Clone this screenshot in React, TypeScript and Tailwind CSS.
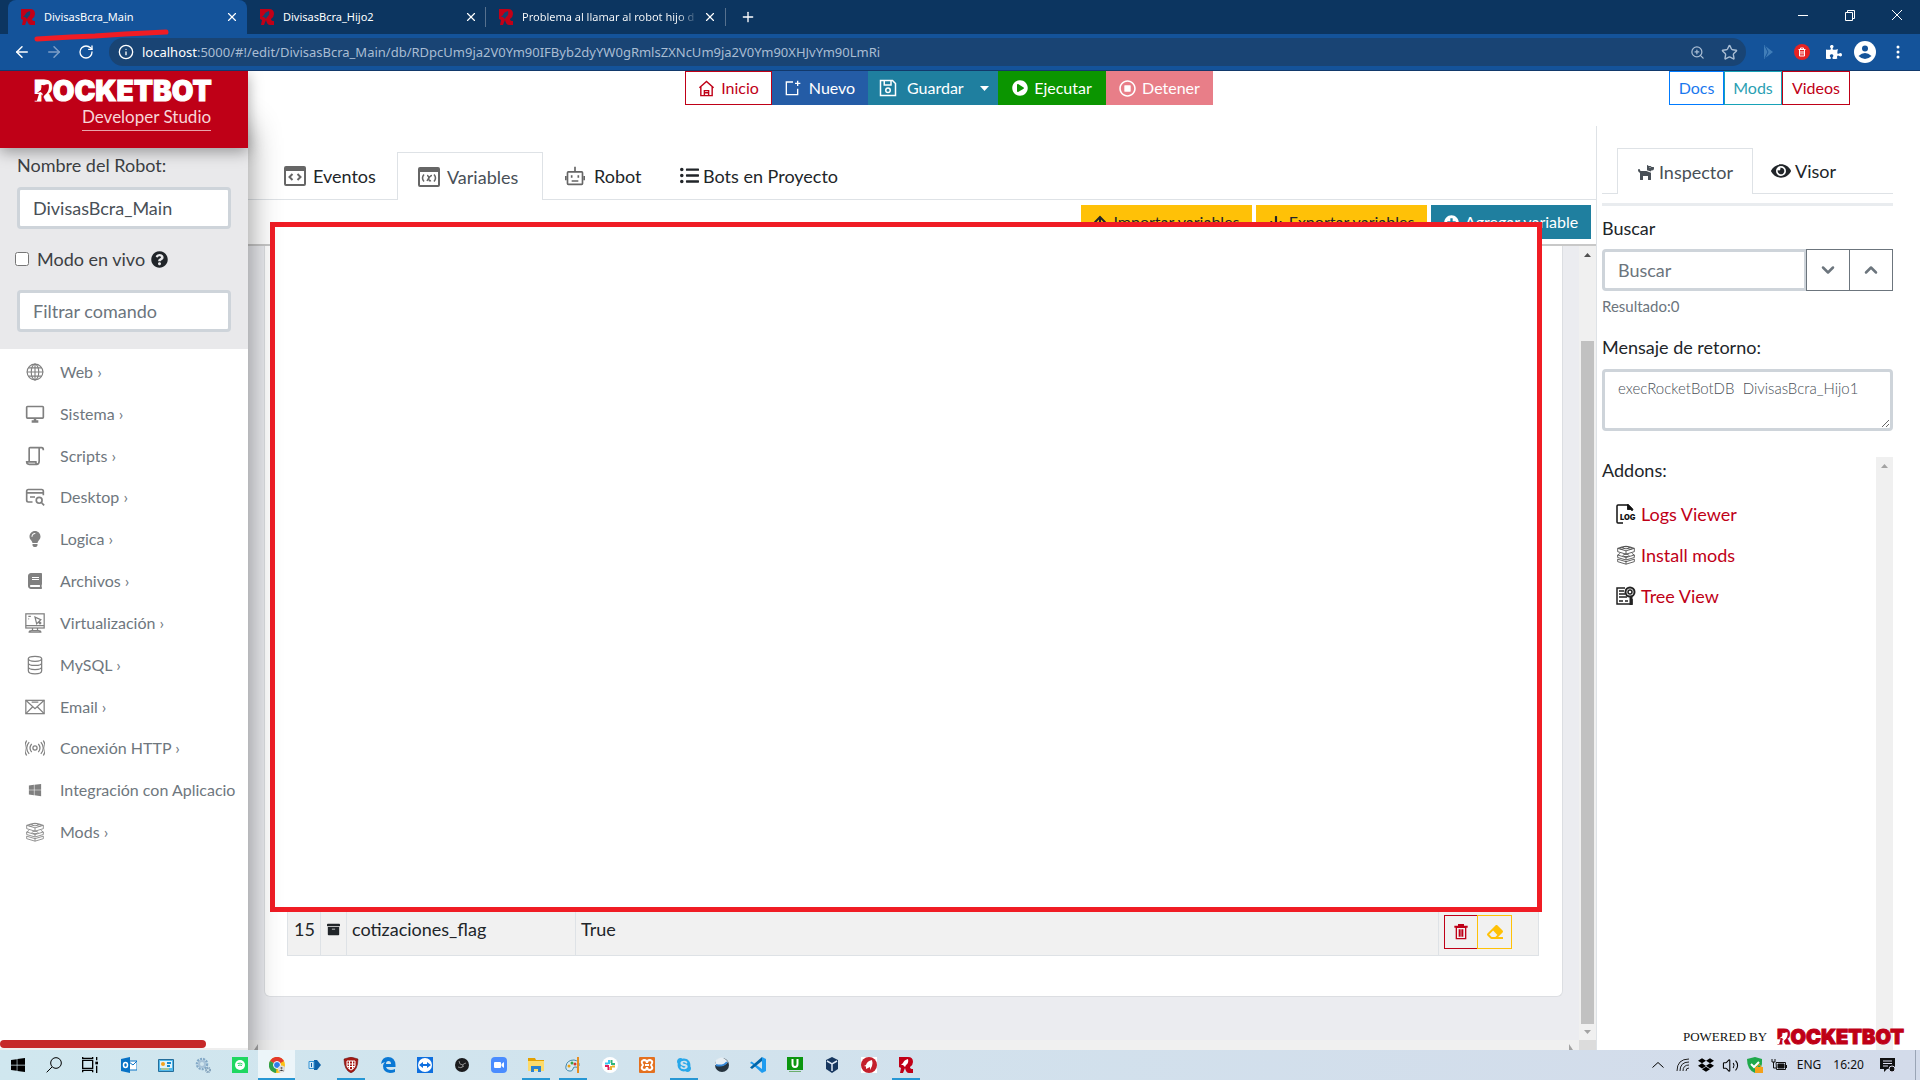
import type {ReactNode} from "react";
import {FaArchive, FaArrowDown, FaArrowUp, FaBook, FaDog, FaDropbox, FaEraser, FaEye, FaLightbulb, FaListUl, FaPlayCircle, FaPlusCircle, FaPuzzlePiece, FaQuestionCircle, FaRegStopCircle, FaSkype, FaWindows} from "react-icons/fa";
import {ArrowLeft, ArrowRight, ChevronDown, ChevronUp, Info, Plus, RotateCw, Star, Volume2, X, ZoomIn} from "lucide-react";

type IconProps = { className?: string };

const RocketR = ({className = "size-4"}: IconProps) => (
    <svg viewBox="0 0 16 16" className={className}>
        <path d="M1 0h9q5 0 5 5 0 3-3 5 0 2 3 2v4h-4q-3 0-4-5l-2 5H2l1-5-2-1z" fill="#c10017"/>
        <path d="M10 2Q6 3 5 6L3 8h2l2 2 1-2q3-2 2-6z" fill="#14436f"/>
    </svg>
);

const Wordmark = ({className, cut}: { className: string, cut: string }) => (
    <span className={`relative inline-block font-black leading-none [-webkit-text-stroke:1px] ${className}`}>
        ROCKETBOT
        <svg viewBox="0 0 20 20" className="absolute left-0 top-[14%] h-[72%] w-[11%]" fill={cut}>
            <path d="M15 3c-4 0-7 2-8 6l-4 3 4-1 2 2-1 5 3-4c3-2 5-6 4-11z"/>
            <path d="M0 13h5l-2 7H0z"/>
        </svg>
    </span>
);

const Line = ({children, className = "size-5", w = 1.5}: { children: ReactNode, className?: string, w?: number }) => (
    <svg viewBox="0 0 24 24" className={className} fill="none" stroke="currentColor" strokeWidth={w}>{children}</svg>
);

const WindowIcon = ({kind}: { kind: "code" | "var" }) => (
    <svg viewBox="0 0 22 20" className="w-[22px] h-5 text-[#666]" fill="none" stroke="currentColor" strokeWidth="2">
        <rect x="1" y="1" width="20" height="18" rx="1"/>
        <path d="M1 3h20" strokeWidth="4"/>
        {kind === "code"
            ? <path d="m8.500 8-3 3 3 3M13.500 8l3 3-3 3"/>
            : <path d="M6 7.500q-3 3.500 0 7M16 7.500q3 3.500 0 7M9 8.500q2 0 2 5M14 8.500q-2 0-5 5.500M11 13.500q1 .5 2 0" strokeWidth="1.500"/>}
    </svg>
);

const ModsIcon = ({className = "size-5"}: IconProps) => (
    <Line className={className} w={1}>
        <path d="M2 4v4l10 3 10-3V4L12 7zM2 12v3l10 3 10-3v-3l-10 3zM2 17v3l10 3 10-3v-3l-10 3zM2 4l6-2h8l6 2M2 12l3-2M22 12l-3-2M12 7v4M12 15v3M12 20v3"/>
        <ellipse cx="12" cy="3" rx="3.500" ry="1.500"/>
        <ellipse cx="7" cy="4" rx="2.500" ry="1"/>
        <ellipse cx="17" cy="4" rx="2.500" ry="1"/>
        <ellipse cx="12" cy="12.500" rx="3.500" ry="1.500"/>
    </Line>
);

const MENU: { label: string, icon: ReactNode }[] = [
    {label: "Web", icon: <Line className="size-[18px]"><circle cx="12" cy="12" r="10.500"/><ellipse cx="12" cy="12" rx="5" ry="10.500"/><path d="M12 1v22M1 12h22M3 6.500h18M3 17.500h18"/></Line>},
    {label: "Sistema", icon: <Line className="size-5" w={2}><rect x="2" y="3" width="20" height="14" rx="1"/><path d="M8 21h8M12 17v4" strokeWidth="3"/></Line>},
    {label: "Scripts", icon: <Line className="size-5" w={2}><path d="M5 18V3q0-1 1-1h14q2 0 2 3M17 2v16q0 4-3 4M2 19h11q0 3 2 3H5q-3 0-3-3z"/></Line>},
    {label: "Desktop", icon: <Line className="size-5" w={2}><path d="M9 18H4q-2 0-2-2V5q0-2 2-2h16q2 0 2 2v5M2 7h20M6 12h6"/><circle cx="17" cy="16" r="3.500"/><path d="m20 19 3 3"/></Line>},
    {label: "Logica", icon: <FaLightbulb className="size-4"/>},
    {label: "Archivos", icon: <FaBook className="size-4"/>},
    {label: "Virtualización", icon: <Line className="size-5"><rect x="1" y="1" width="22" height="17"/><path d="M1 15h22M9 18v3M15 18v3M5 23q0-2 3-2h8q3 0 3 2zM12 5l2 8 2-2 2 2 1-1-2-2 2-2zM4 4h3M4 7h1"/></Line>},
    {label: "MySQL", icon: <Line className="size-5"><ellipse cx="12" cy="4.500" rx="8" ry="3"/><path d="M4 4.500V19c0 5 16 5 16 0V4.500M4 9.500c0 4 16 4 16 0M4 14.500c0 4 16 4 16 0"/></Line>},
    {label: "Email", icon: <Line className="size-5"><rect x="1" y="4" width="22" height="16"/><path d="m1 4 11 10L23 4M1 20l8-8M23 20l-8-8M8 6h8"/></Line>},
    {label: "Conexión HTTP", icon: <Line className="size-5"><circle cx="12" cy="12" r="2.500"/><path d="M8 7q-4 5 0 10M16 7q4 5 0 10M5 5q-6 7 0 14M19 5q6 7 0 14M2 3q-5 9 0 18M22 3q5 9 0 18"/></Line>},
    {label: "Integración con Aplicacio", icon: <FaWindows className="size-[14px]"/>},
    {label: "Mods", icon: <ModsIcon/>},
];

const BROWSER_TABS = ["DivisasBcra_Main", "DivisasBcra_Hijo2", "Problema al llamar al robot hijo d"];

const Browser = () => (
    <header className="relative z-30 shrink-0 bg-[#0c3560] font-['Noto_Sans',sans-serif] text-white">
        <div className="flex h-[34px] items-stretch pl-2">
            {BROWSER_TABS.map((title, i) => (
                <div key={title} className={`flex w-[239px] items-center ${i === 0 ? "rounded-t-lg bg-[#14539a]" : ""} ${i === 2 ? "relative before:absolute before:-left-px before:h-5 before:w-px before:bg-[#57718e]" : ""} pl-3 pr-2`}>
                    <RocketR/>
                    <span className={`ml-2 whitespace-nowrap text-[11px] ${i === 2 ? "bg-linear-to-r from-white from-90% to-white/20 bg-clip-text text-transparent" : ""}`}>{title}</span>
                    <button aria-label="Cerrar" className="ml-auto"><X className="size-[14px]"/></button>
                </div>
            ))}
            <div className="my-2 w-px bg-[#57718e]"/>
            <button aria-label="Nueva" className="px-[14px]"><Plus className="size-4"/></button>
            <div className="ml-auto flex items-center gap-[35px] pb-1 pr-[17px]">
                <svg viewBox="0 0 12 12" className="size-3" stroke="#fff"><path d="M1 6.500h10"/></svg>
                <svg viewBox="0 0 12 12" className="size-3" stroke="#fff" fill="none"><path d="M1.500 3.500h7v8h-7zM3.500 3.500v-2h7v8h-2"/></svg>
                <svg viewBox="0 0 12 12" className="size-3" stroke="#fff"><path d="m1 1 10 10M11 1 1 11"/></svg>
            </div>
        </div>
        <div className="flex h-[37px] items-center border-b border-b-[#12396b] bg-[#14539a] pr-4">
            <ArrowLeft className="ml-[13px] size-[18px]"/>
            <ArrowRight className="ml-[14px] size-[18px] text-[#7d9fc7]"/>
            <RotateCw className="ml-[15px] size-4"/>
            <div className="ml-[15px] flex h-7 flex-1 items-center rounded-full bg-[#194474] pl-[9px] pr-2 text-[#a9bdd3]">
                <Info className="size-4 text-white"/>
                <span className="ml-2 flex-1 text-[13px]"><span className="text-white">localhost</span>:5000/#!/edit/DivisasBcra_Main/db/RDpcUm9ja2V0Ym90IFByb2dyYW0gRmlsZXNcUm9ja2V0Ym90XHJvYm90LmRi</span>
                <ZoomIn className="size-[15px]"/>
                <Star className="ml-4 size-[17px]"/>
            </div>
            <svg viewBox="0 0 12 14" className="ml-4 w-3 h-[14px]"><path d="M2 0 11 7 2 14z" fill="#407db8"/><path d="m3 1 3 6-3 6" stroke="#14539a" fill="none"/></svg>
            <span className="ml-5 flex size-4 items-center justify-center rounded-full bg-[#e62222]">
                <Line className="size-3" w={2}><path d="M5 7h14M9 7V4h6v3M7 7v13h10V7M10 10v7M14 10v7"/></Line>
            </span>
            <FaPuzzlePiece className="ml-4 size-4"/>
            <svg viewBox="0 0 22 22" className="ml-3 size-[22px]"><circle cx="11" cy="11" r="11" fill="#fff"/><circle cx="11" cy="7.500" r="3" fill="#14539a"/><path d="M4.500 15q6.500-6 13 0-6.500 6-13 0" fill="#14539a"/></svg>
            <svg viewBox="0 0 4 14" className="ml-5 mr-1 w-1 h-[14px]" fill="#fff"><circle cx="2" cy="2" r="1.500"/><circle cx="2" cy="7" r="1.500"/><circle cx="2" cy="12" r="1.500"/></svg>
        </div>
        <svg viewBox="0 0 140 16" className="absolute left-8 top-7 h-4 w-[140px]" fill="none" stroke="#f01c24" strokeWidth="5" strokeLinecap="round">
            <path d="m5 11 34-2 24-1 30-2 21-1 20-1"/>
        </svg>
    </header>
);

const Sidebar = () => (
    <aside className="z-20 flex w-[248px] shrink-0 flex-col bg-white shadow-[0_56px_30px_rgba(0,0,0,0.45)]">
        <div className="z-10 flex h-[77px] shrink-0 flex-col bg-[#bf0017] pl-[34px] pt-[6px] text-white shadow-[0_4px_14px_rgba(0,0,0,0.35)]">
            <Wordmark className="self-start font-['Inter',sans-serif] text-[28px]" cut="#bf0017"/>
            <span className="ml-12 self-start border-b border-[#e9a5ac] pb-px text-[17px] leading-6 text-[#f7d5d8]">Developer Studio</span>
        </div>
        <div className="h-[201px] shrink-0 bg-[#e9e9eb] px-[17px] pt-1 text-[#3c4043]">
            <label htmlFor="robot" className="block leading-[26px]">Nombre del Robot:</label>
            <input id="robot" defaultValue="DivisasBcra_Main" className="mt-[9px] h-[42px] w-full rounded border-3 border-[#ced4da] bg-white px-[13px] text-[#495057]"/>
            <label className="-ml-[2px] mt-[17px] flex h-[26px] items-center">
                <input type="checkbox" className="size-[14px]"/>
                <span className="ml-2">Modo en vivo</span>
                <FaQuestionCircle className="ml-[6px] size-[17px] text-[#212529]"/>
            </label>
            <input aria-label="Filtrar comando" placeholder="Filtrar comando" className="mt-[18px] h-[42px] w-full rounded border-3 border-[#ced4da] bg-white px-[13px] placeholder:text-[#6c757d]"/>
        </div>
        <ul className="mr-2 mt-[2px] grid h-[502px] shrink-0 grid-rows-12 overflow-hidden text-base text-[#6f777e]">
            {MENU.map(({label, icon}) => (
                <li key={label} className="flex min-h-0 items-center">
                    <span className="ml-[22px] flex w-[26px] shrink-0 justify-center text-[#808080]">{icon}</span>
                    <a href="#menu" className="ml-3 whitespace-nowrap">{label}{label.startsWith("Integ") ? "" : " ›"}</a>
                </li>
            ))}
        </ul>
        <div className="mt-auto h-2 w-[206px] rounded-full bg-[#c62828]"/>
        <div className="h-[2px] bg-[#eee]"/>
    </aside>
);

const TopBar = () => (
    <div className="flex h-[34px] shrink-0 items-stretch pl-[437px] text-base text-white">
        <button className="flex w-[87px] items-center justify-center gap-[6px] border border-[#bf0017] text-[#bf0017]">
            <Line className="size-[17px]" w={2}><path d="M2 11 12 2l10 9M4 10v12h16V10M9 22v-7h6v7M10 18h4"/></Line>Inicio
        </button>
        <button className="flex w-24 items-center justify-center gap-2 bg-[#245ca6]">
            <Line className="size-4" w={2}><path d="M12 3H2v19h17V13M19 1v8M15 5h8"/></Line>Nuevo
        </button>
        <button className="flex w-[110px] items-center gap-[10px] bg-[#1f7f9f] pl-[11px]">
            <Line className="size-[18px]" w={2}><path d="M2 2h16l4 4v16H2zM7 2v6h9V2"/><circle cx="12" cy="15" r="3"/></Line>Guardar
        </button>
        <button aria-label="Más" className="flex w-5 items-center bg-[#1f7f9f]">
            <svg viewBox="0 0 9 5" className="ml-[2px] w-[9px] h-[5px]" fill="#fff"><path d="M0 0h9L4.500 5z"/></svg>
        </button>
        <button className="flex w-[108px] items-center justify-center gap-[6px] bg-[#0b9500]"><FaPlayCircle className="size-4"/>Ejecutar</button>
        <button className="flex w-[107px] items-center justify-center gap-[6px] bg-[#e87e88]"><FaRegStopCircle className="size-[17px]"/>Detener</button>
        <nav className="ml-auto mr-[70px] flex">
            <a href="#docs" className="flex w-[55px] items-center justify-center border border-[#007bff] text-[#1a78ee]">Docs</a>
            <a href="#mods" className="flex w-[58px] items-center justify-center border border-[#17a2b8] text-[#2b9fb3]">Mods</a>
            <a href="#videos" className="flex w-[68px] items-center justify-center border border-[#bf0017] text-[#bf0017]">Videos</a>
        </nav>
    </div>
);

const Editor = () => (
    <section className="relative flex min-w-0 flex-1 flex-col">
        <div className="mt-[47px] flex h-12 shrink-0 items-stretch border-b border-[#dee2e6] text-[#212529]">
            <button className="flex w-[149px] items-center gap-[7px] pl-9"><WindowIcon kind="code"/>Eventos</button>
            <button className="-mb-px flex w-[146px] items-center gap-[7px] border border-b-0 border-[#dee2e6] bg-white pl-5 text-[#495057]"><WindowIcon kind="var"/>Variables</button>
            <button className="flex w-[137px] items-center gap-[9px] pl-[22px]">
                <Line className="size-5 text-[#666]" w={2}><rect x="3" y="7" width="18" height="15" rx="1"/><path d="M12 1v6M1 12v5M23 12v5M8 18h8M8 11v3M16 11v3"/></Line>Robot
            </button>
            <button className="flex items-center gap-1"><FaListUl className="size-[19px]"/>Bots en Proyecto</button>
        </div>
        <div className="flex h-11 shrink-0 items-start justify-end gap-1 pr-[5px] pt-[5px] text-base text-[#212529]">
            <button className="flex h-[34px] w-[171px] items-center justify-center gap-[6px] bg-[#ffc107]"><FaArrowUp className="size-[14px]"/>Importar variables</button>
            <button className="flex h-[34px] w-[171px] items-center justify-center gap-[6px] bg-[#ffc107]"><FaArrowDown className="size-[14px]"/>Exportar variables</button>
            <button className="flex h-[34px] w-40 items-center justify-center gap-[6px] bg-[#1f7f9f] text-white"><FaPlusCircle className="size-[15px]"/>Agregar variable</button>
        </div>
        <div className="flex min-h-0 flex-1 border-t-2 border-[#c8c8c8] bg-[#ebecf0]">
            <div className="flex min-w-0 flex-1 flex-col">
                <div className="mx-4 flex flex-1 flex-col justify-end rounded-b-md border border-t-0 border-[#dcdee2] bg-white pb-10 pl-[22px] pr-[23px]">
                    <table className="w-full table-fixed border-collapse bg-[#f1f1f1] text-[#212529]">
                        <tbody>
                        <tr className="h-[52px] *:border *:border-[#dee2e6] *:pt-[11px] *:align-top">
                            <td className="w-[33px] pl-[6px]">15</td>
                            <td className="w-[26px]"><FaArchive className="mx-auto mt-[8px] size-[13px]"/></td>
                            <td className="w-[229px] pl-[5px]">cotizaciones_flag</td>
                            <td className="pl-[5px]">True</td>
                            <td className="w-[100px] pl-[5px]">
                                <div className="flex">
                                    <button aria-label="Eliminar" className="flex h-[34px] w-[33px] items-center justify-center border border-r-0 border-[#bf0017] text-[#bf0017]">
                                        <Line className="size-4" w={2}><path d="M2 4h20M9 3V1h6v2" strokeWidth="3"/><path d="M5 5v17h14V5zM9.500 8v11M14.500 8v11M12 8v11"/></Line>
                                    </button>
                                    <button aria-label="Limpiar" className="flex h-[34px] w-[35px] items-center justify-center border border-[#ffc107] text-[#ffc107]"><FaEraser className="size-4"/></button>
                                </div>
                            </td>
                        </tr>
                        </tbody>
                    </table>
                </div>
                <div className="mt-[43px] flex h-[10px] items-end justify-between bg-[#f0f0f0] px-[6px]">
                    <svg viewBox="0 0 4 6" className="w-1 h-[6px]" fill="#a3a3a3"><path d="M4 0v6H0z"/></svg>
                    <svg viewBox="0 0 4 6" className="w-1 h-[6px]" fill="#a3a3a3"><path d="M0 0v6h4z"/></svg>
                </div>
            </div>
            <div className="flex w-[17px] shrink-0 flex-col items-center bg-[#f0f0f0]">
                <svg viewBox="0 0 7 4" className="mt-[7px] w-[7px] h-1" fill="#505050"><path d="M0 4h7L3.500 0z"/></svg>
                <div className="mt-[84px] w-[13px] flex-1 bg-[#c1c1c1]"/>
                <svg viewBox="0 0 7 4" className="my-[6px] w-[7px] h-1" fill="#a3a3a3"><path d="M0 0h7L3.500 4z"/></svg>
                <div className="h-[10px] w-full bg-[#dcdcdc]"/>
            </div>
        </div>
        <div className="absolute bottom-[138px] left-[22px] right-[54px] top-[117px] border-5 border-[#f01c24] bg-white"/>
    </section>
);

const Inspector = () => (
    <section className="relative mt-[21px] flex w-[324px] shrink-0 flex-col border-l border-[#dee2e6] pl-[5px] pr-[27px] text-[#212529]">
        <div className="mt-[22px] flex h-[46px] shrink-0 border-b border-[#dee2e6] pl-[15px]">
            <button className="-mb-px flex w-[136px] items-center justify-center gap-1 border border-b-0 border-[#dee2e6] bg-white text-[#495057]"><FaDog className="size-[18px]"/>Inspector</button>
            <button className="flex items-center gap-1 pl-[18px]"><FaEye className="size-5"/>Visor</button>
        </div>
        <div className="mt-[9px] h-[3px] shrink-0 bg-[#e9ecef]"/>
        <label htmlFor="search" className="mt-[9px] leading-[26px]">Buscar</label>
        <div className="mt-2 flex h-[42px] shrink-0">
            <input id="search" placeholder="Buscar" className="min-w-0 flex-1 rounded-l border-3 border-[#ced4da] px-[13px] placeholder:text-[#6c757d]"/>
            <button aria-label="Siguiente" className="-ml-px flex w-11 items-center justify-center border border-[#6c757d] text-[#6c757d]"><ChevronDown className="size-5" strokeWidth={3}/></button>
            <button aria-label="Anterior" className="-ml-px flex w-11 items-center justify-center border border-[#6c757d] text-[#6c757d]"><ChevronUp className="size-5" strokeWidth={3}/></button>
        </div>
        <small className="mt-1 text-[15px] leading-[22px] text-[#6c757d]">Resultado:0</small>
        <label htmlFor="message" className="mt-[17px] leading-[26px]">Mensaje de retorno:</label>
        <textarea id="message" defaultValue="execRocketBotDB  DivisasBcra_Hijo1" className="mt-[9px] h-[62px] shrink-0 rounded border-3 border-[#ced4da] px-[13px] py-1 text-[15px] font-light leading-6 text-[#495057]"/>
        <div className="mt-[26px] flex min-h-0 flex-1">
            <div className="flex-1">
                <p className="leading-[26px]">Addons:</p>
                <ul className="ml-[14px] mt-[10px] text-[#bf0017]">
                    <li className="flex h-[41px] items-center gap-[5px]">
                        <svg viewBox="0 0 20 20" className="size-5" fill="none" stroke="#111" strokeWidth="1.500">
                            <path d="M7 19H2q-1 0-1-1V2q0-1 1-1h10l4 4v2M12 1v4h4" /><path d="m12 1 4 4h-4z" fill="#111"/>
                            <text x="4" y="16" fontSize="7.500" fontWeight="900" fill="#111" stroke="none" fontFamily="Inter">LOG</text>
                        </svg>
                        <a href="#logs">Logs Viewer</a>
                    </li>
                    <li className="flex h-[41px] items-center gap-[5px]"><ModsIcon className="size-5 text-[#444]"/><a href="#mods">Install mods</a></li>
                    <li className="flex h-[41px] items-center gap-[5px]">
                        <svg viewBox="0 0 20 20" className="size-5" fill="none" stroke="#222" strokeWidth="1.500">
                            <path d="M9 2H1v16h15v-5M3 5h5M3 8h6M3 11h8M3 15h4M9 15h3"/><circle cx="14" cy="6" r="4.500" strokeWidth="2"/><circle cx="14" cy="6" r="2"/><path d="M15 11v8" strokeWidth="3"/>
                        </svg>
                        <a href="#tree">Tree View</a>
                    </li>
                </ul>
            </div>
            <div className="w-[17px] bg-[#f0f0f0]">
                <svg viewBox="0 0 7 4" className="mx-auto mt-[7px] w-[7px] h-1" fill="#a3a3a3"><path d="M0 4h7L3.500 0z"/></svg>
            </div>
        </div>
        <div className="absolute bottom-[3px] right-4 flex items-center gap-[10px] text-[#111]">
            <span className="font-['Liberation_Serif',serif] text-[13px] leading-5">POWERED BY</span>
            <Wordmark className="font-['Inter',sans-serif] text-xl text-[#bf0017]" cut="#fff"/>
        </div>
    </section>
);

const Pic = ({children}: { children: ReactNode }) => <svg viewBox="0 0 16 16" className="size-4">{children}</svg>;

const APPS: { name: string, open?: boolean, active?: boolean, icon: ReactNode }[] = [
    {name: "Outlook", icon: <Pic><path d="M8 4h8v9H8z" fill="#fff" stroke="#0872c6"/><path d="m8 5 4 3 4-4" fill="none" stroke="#0872c6"/><path d="m0 2 9-2v16l-9-2z" fill="#0872c6"/><ellipse cx="4.500" cy="8" rx="2" ry="2.500" fill="none" stroke="#fff" strokeWidth="1.500"/></Pic>},
    {name: "Panel", icon: <Pic><path d="M.5 2.500h15v12H.5z" fill="#51b9ec" stroke="#246e9b"/><path d="M2 4h12v7H2z" fill="#dff3fc"/><circle cx="5" cy="7" r="2" fill="#f4a31d"/><path d="M9 5h4v2H9zM9 8h3v2H9z" fill="#1689ce"/><path d="M3 12h8" stroke="#ffd34a"/></Pic>},
    {name: "Servicios", icon: <Pic><circle cx="7" cy="7" r="5" fill="none" stroke="#83a9c7" strokeWidth="2.500" strokeDasharray="2 1"/><circle cx="7" cy="7" r="3" fill="none" stroke="#a8c3d8" strokeWidth="2"/><circle cx="13" cy="13" r="2" fill="none" stroke="#7f9eb8" strokeWidth="2" strokeDasharray="1 .5"/></Pic>},
    {name: "Spotify", icon: <Pic><path d="M0 0h16v16H0z" fill="#1ed760"/><circle cx="8" cy="8" r="5" fill="#fff"/><path d="M5.500 6.500q3-1 5 .5M6 8.500q2-1 4 0" stroke="#1ed760" fill="none"/></Pic>},
    {name: "Chrome", active: true, icon: <Pic><circle cx="8" cy="8" r="8" fill="#fbc116"/><path d="M8 8 1 4a8 8 0 0 1 14 0z" fill="#e33b2e"/><path d="M8 8 1 4a8 8 0 0 0 6 12z" fill="#2ca14c"/><circle cx="8" cy="8" r="3.500" fill="#2f7de9" stroke="#fff"/><circle cx="12.500" cy="12" r="3.500" fill="#ddd"/><circle cx="12.500" cy="11" r="1" fill="#666"/><path d="M10.500 14q2-2 4 0" stroke="#666"/></Pic>},
    {name: "Escritorio", icon: <Pic><path d="M8 3h3l4 5-4 5H8z" fill="#0f62a8"/><path d="M3 4.500h5v7H3z" fill="#d6ebf7" stroke="#3292d4"/><path d="M5.500 6v4" stroke="#0f62a8"/></Pic>},
    {name: "Escudo", open: true, icon: <Pic><path d="M8 0 15 2q0 11-7 14Q1 13 1 2z" fill="#a41914" stroke="#5c0c0c" strokeWidth=".5"/><path d="M4 4h8v5q-1 3-4 4-3-1-4-4zM6.500 4v8M9.500 4v8M4 7h8M4 9.500h8" stroke="#fff" fill="none"/></Pic>},
    {name: "Edge", icon: <Pic><path d="M1 7q1-7 7-7 7 0 7.500 8v2H6q1 3 5 3 2 0 4-1v3q-2 1-5 1-7-1-7-7 0-2 2-4-3 1-4 2M6 7h5q0-3-2.500-3T6 7" fill="#0a78d4" fillRule="evenodd"/></Pic>},
    {name: "TeamViewer", icon: <Pic><path d="M0 0h16v16H0z" fill="#0e6fdf"/><circle cx="8" cy="8" r="7" fill="#fff"/><path d="m2 8 4-3v2h4V5l4 3-4 3V9H6v2z" fill="#0e6fdf"/></Pic>},
    {name: "OBS", icon: <Pic><circle cx="8" cy="8" r="7" fill="#1b1b1d"/><path d="M5 4q0 4 4 4M12 6q-3 0-4 4M4 10q3 2 6-1" stroke="#888" fill="none"/></Pic>},
    {name: "Zoom", icon: <Pic><rect width="16" height="16" rx="4" fill="#4a8cff"/><rect x="3" y="5" width="7" height="6" rx="1" fill="#fff"/><path d="m10.500 7 2.500-2v6l-2.500-2z" fill="#fff"/></Pic>},
    {name: "Explorador", open: true, icon: <Pic><path d="M0 1h7l1 2h8v11H0z" fill="#e3a000"/><path d="M0 4h16v10H0z" fill="#fddb6a"/><path d="M3 15V9h10v6h-3v-3H6v3z" fill="#2b83cf"/></Pic>},
    {name: "Paint", open: true, icon: <Pic><path d="M1 9q1-6 8-6 6 1 5 6-1 2-4 1-2 0-2 2-1 3-4 2-4-1-3-5z" fill="#d6eaf4" stroke="#4387a8"/><circle cx="4" cy="9" r="1.500" fill="#e8a012"/><circle cx="7" cy="6" r="1.500" fill="#37a447"/><circle cx="10" cy="7" r="1.500" fill="#d43b30"/><path d="M13 0v16" stroke="#e58d22" strokeWidth="2"/></Pic>},
    {name: "Slack", icon: <Pic><circle cx="8" cy="8" r="8" fill="#fff"/><path d="M7 3v4" stroke="#36c5f0" strokeWidth="2"/><path d="M9 7h4" stroke="#2eb67d" strokeWidth="2"/><path d="M9 9v4" stroke="#ecb22e" strokeWidth="2"/><path d="M3 9h4" stroke="#e01e5a" strokeWidth="2"/><path d="M3 6.500h3" stroke="#36c5f0" strokeWidth="2"/><path d="M9.500 3v3" stroke="#2eb67d" strokeWidth="2"/><path d="M10 9.500h3" stroke="#ecb22e" strokeWidth="2"/><path d="M6.500 10v3" stroke="#e01e5a" strokeWidth="2"/></Pic>},
    {name: "XAMPP", icon: <Pic><rect width="16" height="16" rx="1" fill="#e4701e"/><path d="M5 3q3 0 3 3 0-3 3-3 4 1 1 5 3 4-1 5-3 0-3-3 0 3-3 3-4-1-1-5-3-4 1-5zM6 8h4" stroke="#fff" strokeWidth="2" fill="none"/></Pic>},
    {name: "Skype", open: true, icon: <FaSkype className="size-4 text-[#28a8ea]"/>},
    {name: "Esfera", icon: <Pic><circle cx="9" cy="8" r="7" fill="#26343f"/><path d="M3 3q6-6 12 2-5 6-13 3z" fill="#e7eef3"/><path d="M3 8q7 2 11-3" stroke="#3387d8" strokeWidth="2" fill="none"/></Pic>},
    {name: "VS Code", icon: <Pic><path d="m12 0 4 2v12l-4 2L2 7 0 6l1.500-1.500L12 12z" fill="#1f9cf0"/><path d="M12 0v4L2 12l-2-1.500z" fill="#0065a9"/></Pic>},
    {name: "uTorrent", icon: <Pic><path d="M0 0h16v13H0z" fill="#0b960f"/><path d="M5.500 2v5q0 3 2.500 3t2.500-3V2" stroke="#fff" strokeWidth="2" fill="none"/><path d="M2 14.500h12" stroke="#6cae6d"/></Pic>},
    {name: "VirtualBox", icon: <Pic><path d="m8 0 6 3v9l-6 4-6-4V3z" fill="#17375f"/><path d="m3 4 5 3 5-3M8 7v7" stroke="#dde8f5" strokeWidth="1.500" fill="none"/></Pic>},
    {name: "Cohete", icon: <Pic><path d="M0 0h16v16H0z" fill="#fff"/><circle cx="8" cy="8" r="8" fill="#c4202c"/><path d="M11 3q-5 1-6 5l-2 1 2 .5L5 12l4-2v3l2-4q1-3 0-6z" fill="#fff"/></Pic>},
    {name: "Rocketbot", open: true, icon: <Pic><path d="M1 0h9q5 0 5 5 0 3-3 5 0 2 3 2v4h-4q-3 0-4-5l-2 5H2l1-5-2-1z" fill="#c10017"/><path d="M10 2Q6 3 5 6L3 8h2l2 2 1-2q3-2 2-6z" fill="#fff"/></Pic>},
];

const Taskbar = () => (
    <footer className="relative z-30 flex h-[30px] shrink-0 items-stretch bg-linear-to-r from-[#d0e7ef] to-[#d3dbea] font-['Noto_Sans',sans-serif] text-[#111]">
        <button aria-label="Inicio" className="flex w-9 items-center justify-center"><FaWindows className="size-4 text-black"/></button>
        <button aria-label="Buscar" className="flex w-9 items-center justify-center"><Line className="size-4 text-black"><circle cx="15" cy="9" r="8"/><path d="m9 15-8 8"/></Line></button>
        <button aria-label="Tareas" className="mr-[2px] flex w-9 items-center justify-center"><Line className="size-4 text-black" w={2}><path d="M1 5h15v12H1zM1 0v2h15V0M1 23v-3h15v3M22 0v5M22 13v11"/><path d="M22 7v4" strokeWidth="4"/></Line></button>
        {APPS.map(({name, open, active, icon}) => (
            <button key={name} aria-label={name} className={`relative flex w-[37px] items-center justify-center ${active ? "border-b-2 border-[#2797d4] bg-[#ecf5f9] pt-[2px]" : ""}`}>
                {icon}
                {open && <span className="absolute bottom-0 h-[2px] w-7 bg-[#2797d4]"/>}
            </button>
        ))}
        <div className="ml-auto flex items-center text-xs">
            <Line className="size-3 text-black" w={2}><path d="m1 17 11-10 11 10"/></Line>
            <svg viewBox="0 0 14 14" className="ml-3 size-[14px]" fill="none" stroke="#222"><path d="M1 13Q1 1 13 1M4 13q0-9 9-9M7 13q0-6 6-6M10 13q0-3 3-3"/></svg>
            <FaDropbox className="ml-2 size-4 text-black"/>
            <Volume2 className="ml-2 size-[17px] text-black" strokeWidth={1.5}/>
            <svg viewBox="0 0 16 16" className="ml-2 size-4"><path d="m8 0 7 2q1 11-7 14Q0 13 0 2z" fill="#20a94b"/><path d="m4 7 3 3 5-5" stroke="#fff" strokeWidth="2" fill="none"/><path d="M8 10h8v6H8z" fill="#f4a11b"/><path d="M10 10q2-5 4 0" stroke="#f4a11b" fill="none"/></svg>
            <svg viewBox="0 0 16 12" className="ml-2 w-4 h-3" fill="none" stroke="#111"><path d="M5 3.500h9.500v7h-9z"/><path d="M7 5h6v4H7z" fill="#111"/><path d="M15.500 6v3M1 0v3h3V0M2.500 3v6H5"/></svg>
            <span className="ml-[10px]">ENG</span>
            <span className="ml-3">16:20</span>
            <svg viewBox="0 0 16 16" className="ml-4 size-4"><path d="M0 1h15v11H7l-3 3v-3H0z" fill="#111"/><path d="M3 4h9M3 6.500h9M3 9h5" stroke="#dde"/><circle cx="12" cy="12" r="3" fill="#111" stroke="#dde"/></svg>
            <div className="ml-[19px] mr-1 h-[30px] w-px bg-[#9aa5b5]"/>
        </div>
    </footer>
);

export default function App() {
    return (
        <div className="flex h-screen flex-col overflow-hidden bg-white font-['Lato',sans-serif] text-lg">
            <Browser/>
            <div className="flex min-h-0 flex-1">
                <Sidebar/>
                <div className="flex min-w-0 flex-1 flex-col">
                    <TopBar/>
                    <main className="flex min-h-0 flex-1">
                        <Editor/>
                        <Inspector/>
                    </main>
                </div>
            </div>
            <Taskbar/>
        </div>
    );
}
